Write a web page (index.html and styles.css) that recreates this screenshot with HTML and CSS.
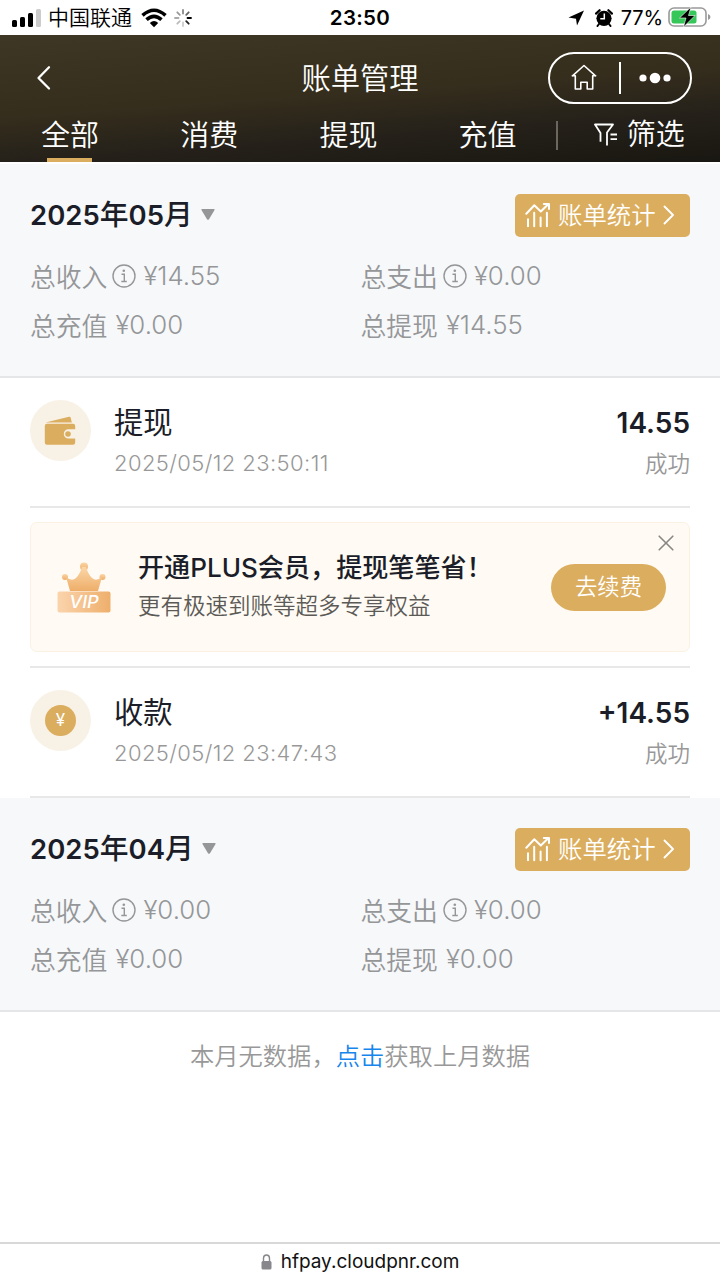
FILE: index.html
```html
<!DOCTYPE html>
<html lang="zh-CN">
<head>
<meta charset="utf-8">
<title>账单管理</title>
<link rel="stylesheet" href="styles.css">
</head>
<body>
<svg class="defs" width="0" height="0">
  <defs>
    <symbol id="info" viewBox="0 0 24 24">
      <circle cx="12" cy="12" r="11" fill="none" stroke="currentColor" stroke-width="1.4"/>
      <circle cx="11.8" cy="6.8" r="1.3" fill="currentColor"/>
      <path d="M9.5 10.2H12.3V17.3M9.3 17.5H14.8" fill="none" stroke="currentColor" stroke-width="1.4"/>
    </symbol>
    <symbol id="stats" viewBox="0 0 26 26">
      <path d="M1.3 11.8L9.3 3.3L15.8 9.5L23 2.5M18.8 2H24V7" fill="none" stroke="#fff" stroke-width="2" stroke-linecap="round" stroke-linejoin="round"/>
      <path d="M3 17.3V24.2M9.2 10.7V24.2M15.6 15.5V24.2M21.9 10.7V24.2" fill="none" stroke="#fff" stroke-width="2" stroke-linecap="round"/>
    </symbol>
    <symbol id="next" viewBox="0 0 12 20">
      <path d="M1.5 1.5L10 10L1.5 18.5" fill="none" stroke="#fff" stroke-width="1.9" stroke-linecap="round" stroke-linejoin="round"/>
    </symbol>
  </defs>
</svg>
<div class="screen">
  <div class="status">
    <div class="status-left">
      <svg class="signal" width="30" height="18" viewBox="0 0 30 18">
        <rect x="0" y="11" width="5" height="7" rx="1.5"/><rect x="8" y="8" width="5" height="10" rx="1.5"/><rect x="16" y="4" width="5" height="14" rx="1.5"/><rect x="24" y="0" width="5" height="18" rx="1.5" fill="#ccc"/>
      </svg>
      <span class="carrier">中国联通</span>
      <svg class="wifi" width="26" height="20" viewBox="0 0 26 20">
        <path d="M1.5 7.3Q13-2.8 24.5 7.3M5.5 11.7Q13 5 20.5 11.7" fill="none" stroke="#000" stroke-width="3.6"/>
        <path d="M8.8 14.9Q13 11.2 17.2 14.9L13 19.2Z"/>
      </svg>
      <svg class="spinner" width="18" height="18" viewBox="-9 -9 18 18" stroke-width="1.8" stroke-linecap="round">
        <path d="M0-8V-4.5" stroke="#888"/><path d="M5.7-5.7L3.2-3.2" stroke="#666"/><path d="M8 0H4.5" stroke="#000"/><path d="M5.7 5.7L3.2 3.2" stroke="#222"/><path d="M0 8V4.5" stroke="#ccc"/><path d="M-5.7 5.7L-3.2 3.2" stroke="#bbb"/><path d="M-8 0H-4.5" stroke="#aaa"/><path d="M-5.7-5.7L-3.2-3.2" stroke="#999"/>
      </svg>
    </div>
    <div class="clock">23:50</div>
    <div class="status-right">
      <svg width="17" height="16" viewBox="0 0 17 16"><path d="M0.5 7.5L16 0.5L9 15.5L8 8.7Z"/></svg>
      <svg class="alarm" width="18" height="18" viewBox="0 0 18 18">
        <circle cx="9" cy="9.3" r="7.6"/><path d="M1 4.6L4.6 1.2M17 4.6L13.4 1.2" stroke="#000" stroke-width="2.2" stroke-linecap="round"/><path d="M4 15L2.5 17M14 15L15.5 17" stroke="#000" stroke-width="2" stroke-linecap="round"/><path d="M9.3 4.5V9.8H5.3" fill="none" stroke="#fff" stroke-width="1.5"/>
      </svg>
      <span class="percent">77%</span>
      <svg class="battery" width="43" height="21" viewBox="0 0 43 21">
        <rect x="1" y="1" width="37" height="18" rx="5" fill="#fff" stroke="#999" stroke-width="1.6"/>
        <rect x="3.5" y="3.5" width="25" height="13" rx="2.5" fill="#35c759"/>
        <path d="M40 7V13Q42.5 12 42.5 10T40 7Z" fill="#999"/>
        <path d="M23 0L11.5 11H18L15.5 20L27 8.5H20.5Z" stroke="#fff" stroke-width=".6"/>
      </svg>
    </div>
  </div>

  <header class="header">
    <div class="titlebar">
      <svg class="back" width="16" height="26" viewBox="0 0 16 26"><path d="M13 2.2L2.5 13L13 23.5" fill="none" stroke="#fff" stroke-width="2.3" stroke-linecap="round" stroke-linejoin="round"/></svg>
      <h1 class="title">账单管理</h1>
      <div class="capsule">
        <svg class="home" width="26" height="27" viewBox="0 0 26 27"><path d="M1.5 11.8L13 1.5L24.5 11.8M1.3 11.8H4.3V25H9.8V18.2H16.2V25H21.7V11.8H24.7" fill="none" stroke="#fff" stroke-width="1.6" stroke-linejoin="round" stroke-linecap="round"/></svg>
        <i class="capsule-line"></i>
        <svg class="more" width="32" height="12" viewBox="0 0 32 12" fill="#fff"><circle cx="4" cy="6" r="3.6"/><circle cx="16" cy="6" r="5.3"/><circle cx="28" cy="6" r="3.6"/></svg>
      </div>
    </div>
    <nav class="tabs">
      <span class="tab active">全部</span>
      <span class="tab">消费</span>
      <span class="tab">提现</span>
      <span class="tab">充值</span>
      <i class="tab-line"></i>
      <span class="filter">
        <svg width="24" height="24" viewBox="0 0 24 24"><path d="M6.5 18.8V10L1 1.5H19L13 9.5V22.5M16.5 11.5H23M16.5 16.2H23" fill="none" stroke="#fff" stroke-width="1.8" stroke-linejoin="round"/></svg>筛选</span>
    </nav>
  </header>

  <section class="summary">
    <div class="month-row">
      <div class="month"><span class="num">2025</span>年<span class="num">05</span>月<svg class="caret" width="16" height="13" viewBox="0 0 16 13"><path d="M2.2 1H13.8Q15.2 1 14.4 2.3L9 11.2Q8 12.5 7 11.2L1.6 2.3Q.8 1 2.2 1Z" fill="#949698"/></svg></div>
      <div class="stats"><svg width="26" height="26"><use href="#stats"/></svg><span class="stats-text">账单统计</span><svg width="12" height="20"><use href="#next"/></svg></div>
    </div>
    <div class="totals">
      <div class="total">总收入<svg class="info" width="24" height="24"><use href="#info"/></svg><span class="amt">¥14.55</span></div>
      <div class="total">总支出<svg class="info" width="24" height="24"><use href="#info"/></svg><span class="amt">¥0.00</span></div>
      <div class="total">总充值<span class="amt gap">¥0.00</span></div>
      <div class="total">总提现<span class="amt gap">¥14.55</span></div>
    </div>
  </section>

  <main class="list">
    <article class="item">
      <div class="avatar">
        <svg class="wallet" width="32" height="30" viewBox="0 0 32 30" fill="#dbad5e"><path d="M1.5 6.5L25 .7Q26.3.5 26.7 1.7L27.8 6.5Z"/><path d="M3 7.7H29Q31.2 7.7 31.2 10V13.2H24.5A4.7 4.7 0 0 0 24.5 22.6H31.2V26.5Q31.2 28.7 29 28.7H3Q.8 28.7.8 26.5V10Q.8 7.7 3 7.7Z"/><circle cx="24" cy="18" r="2.8"/></svg>
      </div>
      <div class="detail"><div class="name">提现</div><div class="time">2025/05/12 23:50:11</div></div>
      <div class="result"><div class="money">14.55</div><div class="state">成功</div></div>
    </article>

    <aside class="promo">
      <svg class="vip" width="54" height="52" viewBox="0 0 54 52">
        <defs>
          <linearGradient id="crown" x1="0" y1="0" x2="0" y2="1"><stop offset="0" stop-color="#fbd6a7"/><stop offset="1" stop-color="#eeae69"/></linearGradient>
          <linearGradient id="plate"><stop offset="0" stop-color="#fbd4ad"/><stop offset="1" stop-color="#eeaf6c"/></linearGradient>
        </defs>
        <g fill="url(#crown)"><circle cx="27" cy="4.5" r="4"/><circle cx="8" cy="15" r="3"/><circle cx="45.5" cy="15" r="3"/><path d="M9 15Q15 20 19 16Q23 12 25 5H29Q31 12 35 16Q39 20 45 15L41 29H13Z"/></g>
        <rect x=".5" y="29.5" width="53" height="21" rx="2" fill="url(#plate)"/>
        <text class="vip-text" x="27" y="46.3" text-anchor="middle" textLength="29.5" lengthAdjust="spacingAndGlyphs">VIP</text>
      </svg>
      <div class="promo-copy"><div class="promo-title">开通<span class="latin">PLUS</span>会员，提现笔笔省！</div><div class="promo-sub">更有极速到账等超多专享权益</div></div>
      <div class="renew">去续费</div>
      <svg class="close" width="16" height="16" viewBox="0 0 16 16"><path d="M1.2 1.2L14.8 14.8M14.8 1.2L1.2 14.8" stroke="#888783" stroke-width="1.6" stroke-linecap="round"/></svg>
    </aside>

    <article class="item second">
      <div class="avatar"><div class="coin">¥</div></div>
      <div class="detail"><div class="name">收款</div><div class="time">2025/05/12 23:47:43</div></div>
      <div class="result"><div class="money">+14.55</div><div class="state">成功</div></div>
    </article>
  </main>

  <section class="summary">
    <div class="month-row">
      <div class="month"><span class="num">2025</span>年<span class="num">04</span>月<svg class="caret" width="16" height="13" viewBox="0 0 16 13"><path d="M2.2 1H13.8Q15.2 1 14.4 2.3L9 11.2Q8 12.5 7 11.2L1.6 2.3Q.8 1 2.2 1Z" fill="#949698"/></svg></div>
      <div class="stats"><svg width="26" height="26"><use href="#stats"/></svg><span class="stats-text">账单统计</span><svg width="12" height="20"><use href="#next"/></svg></div>
    </div>
    <div class="totals">
      <div class="total">总收入<svg class="info" width="24" height="24"><use href="#info"/></svg><span class="amt">¥0.00</span></div>
      <div class="total">总支出<svg class="info" width="24" height="24"><use href="#info"/></svg><span class="amt">¥0.00</span></div>
      <div class="total">总充值<span class="amt gap">¥0.00</span></div>
      <div class="total">总提现<span class="amt gap">¥0.00</span></div>
    </div>
  </section>

  <p class="empty">本月无数据，<a class="link">点击</a>获取上月数据</p>

  <footer class="urlbar">
    <svg width="11" height="16" viewBox="0 0 11 16"><path d="M2.5 8V4.2A3 3.2 0 0 1 8.5 4.2V8" fill="none" stroke="#88888c" stroke-width="1.4"/><rect x=".5" y="7" width="10" height="8.5" rx="1.5" fill="#88888c"/></svg>
    <span>hfpay.cloudpnr.com</span>
  </footer>
</div>
</body>
</html>
```
FILE: styles.css
```css
* { box-sizing: border-box; }
body { margin: 0; background: #fff; font-family: Inter, "Noto Sans CJK SC", sans-serif; color: #1b1e28; }
svg { display: block; flex: none; }
.defs { position: absolute; }
.screen { width: 720px; height: 1280px; display: flex; flex-direction: column; overflow: hidden; white-space: nowrap; }

.status { height: 35px; flex: none; display: grid; grid-template-columns: 300px 120px 300px; align-items: center; color: #000; }
.status-left { display: flex; align-items: center; padding-left: 12px; }
.carrier { font-size: 21px; line-height: 34px; margin-left: 6px; font-weight: 350; }
.wifi { margin-left: 9px; }
.spinner { margin-left: 7px; }
.clock { text-align: center; font-size: 20.5px; font-weight: 600; letter-spacing: .3px; line-height: 34px; padding-top: 1px; }
.status-right { display: flex; align-items: center; justify-content: flex-end; padding-right: 9px; }
.alarm { margin-left: 10px; }
.percent { font-size: 20px; margin-left: 8px; line-height: 34px; padding-top: 1px; letter-spacing: -.1px; }
.battery { margin-left: 5px; }

.header { height: 127px; flex: none; color: #fff; background: linear-gradient(176deg, #3f3725 0%, #362e1d 45%, #25211a 72%, #191711 100%); }
.titlebar { height: 73px; display: grid; grid-template-columns: 265px 190px 1fr; align-items: center; padding-top: 12px; }
.back { margin-left: 36px; }
.title { margin: 0; padding-top: 3px; text-align: center; font-size: 29.3px; font-weight: 350; line-height: 42px; }
.capsule { width: 144px; height: 52px; border: 2px solid #fff; border-radius: 26px; margin-left: 93px; display: flex; align-items: center; padding-left: 21px; }
.capsule-line { width: 2px; height: 32px; background: #fff; margin-left: 22px; }
.more { margin-left: 18px; }
.tabs { height: 54px; display: flex; align-items: center; padding-left: 41px; font-size: 29px; line-height: 56px; font-weight: 350; }
.tab { width: 58px; height: 54px; margin-right: 81.2px; display: flex; flex-direction: column; align-items: center; }
.tab.active { background: linear-gradient(#dbad5e, #dbad5e) 6px 100% / 45px 4px no-repeat; }
.tab-line { width: 2px; height: 29px; background: #6b675f; margin-left: -42px; }
.filter { display: flex; align-items: center; gap: 9px; margin-left: 36px; }

.summary { height: 214px; flex: none; background: #f7f8fa; padding: 29px 30px 0; border-bottom: 2px solid #e5e6e8; }
.header + .summary { border-top: 2px solid #fff; height: 216px; }
.month-row { height: 44px; display: flex; justify-content: space-between; align-items: center; }
.month { display: flex; align-items: center; font-size: 28.8px; font-weight: 500; line-height: 44px; }
.num { font-weight: 600; font-size: 27.5px; }
.caret { margin: 0 0 2px 7px; }
.stats { width: 175px; height: 43px; background: #dbad5e; border-radius: 5px; display: flex; align-items: center; color: #fff; font-size: 24.4px; font-weight: 350; padding-left: 10px; }
.stats-text { margin: 0 7px; line-height: 43px; }
.totals { display: grid; grid-template-columns: 330.5px 1fr; grid-auto-rows: 48.7px; padding-top: 14.5px; color: #949698; }
.total { display: flex; align-items: center; font-size: 25.8px; font-weight: 350; }
.info { margin-left: 5px; }
.amt { margin-left: 7px; font-weight: 350; }
.gap { margin-left: 8px; }

.list { flex: none; padding: 0 30px; }
.item { height: 130px; display: flex; padding-top: 22px; border-bottom: 2px solid #e8e8e8; }
.avatar { width: 61px; height: 61px; flex: none; border-radius: 50%; background: #f8f2e6; display: flex; align-items: center; justify-content: center; }
.wallet { margin-right: 2px; }
.coin { width: 31px; height: 31px; border-radius: 50%; background: #dbad5e; color: #fff; font-size: 17px; line-height: 31px; text-align: center; }
.detail { flex: 1; margin-left: 23px; }
.name { font-size: 29.3px; line-height: 46px; }
.time { font-size: 22px; line-height: 35px; color: #989898; font-weight: 350; letter-spacing: .4px; }
.result { text-align: right; }
.money { font-size: 28px; font-weight: 600; line-height: 46px; }
.state { font-size: 22.5px; line-height: 35px; color: #989898; font-weight: 350; }
.promo { position: relative; height: 130px; margin: 14px 0; padding-left: 26px; border: 1px solid #fbf1e2; border-radius: 7px; background: #fffbf4; display: flex; align-items: flex-start; }
.vip { margin-top: 39px; }
.vip-text { font: italic 500 17px Inter, sans-serif; fill: #fff; }
.promo-copy { margin-left: 27px; width: 413px; padding-top: 25px; }
.promo-title { font-size: 26.1px; font-weight: 500; line-height: 40px; }
.latin { font-weight: 550; }
.promo-sub { font-size: 22.5px; font-weight: 350; line-height: 36px; color: #5c5a57; }
.renew { width: 115px; height: 47px; margin-top: 41px; border-radius: 24px; background: #dbad5e; color: #fff; text-align: center; font-size: 22.3px; font-weight: 350; line-height: 46px; }
.close { position: absolute; right: 15px; top: 12px; }
.second { border-top: 2px solid #e8e8e8; height: 132px; }

.empty { margin: 0; height: 88px; text-align: center; color: #989898; font-size: 24.3px; font-weight: 350; line-height: 88px; }
.link { color: #1685ec; }
.urlbar { margin-top: auto; height: 38px; flex: none; border-top: 2px solid #d8d8d8; display: flex; align-items: center; justify-content: center; gap: 9px; font-size: 19px; color: #111; padding-bottom: 1px; }
```
